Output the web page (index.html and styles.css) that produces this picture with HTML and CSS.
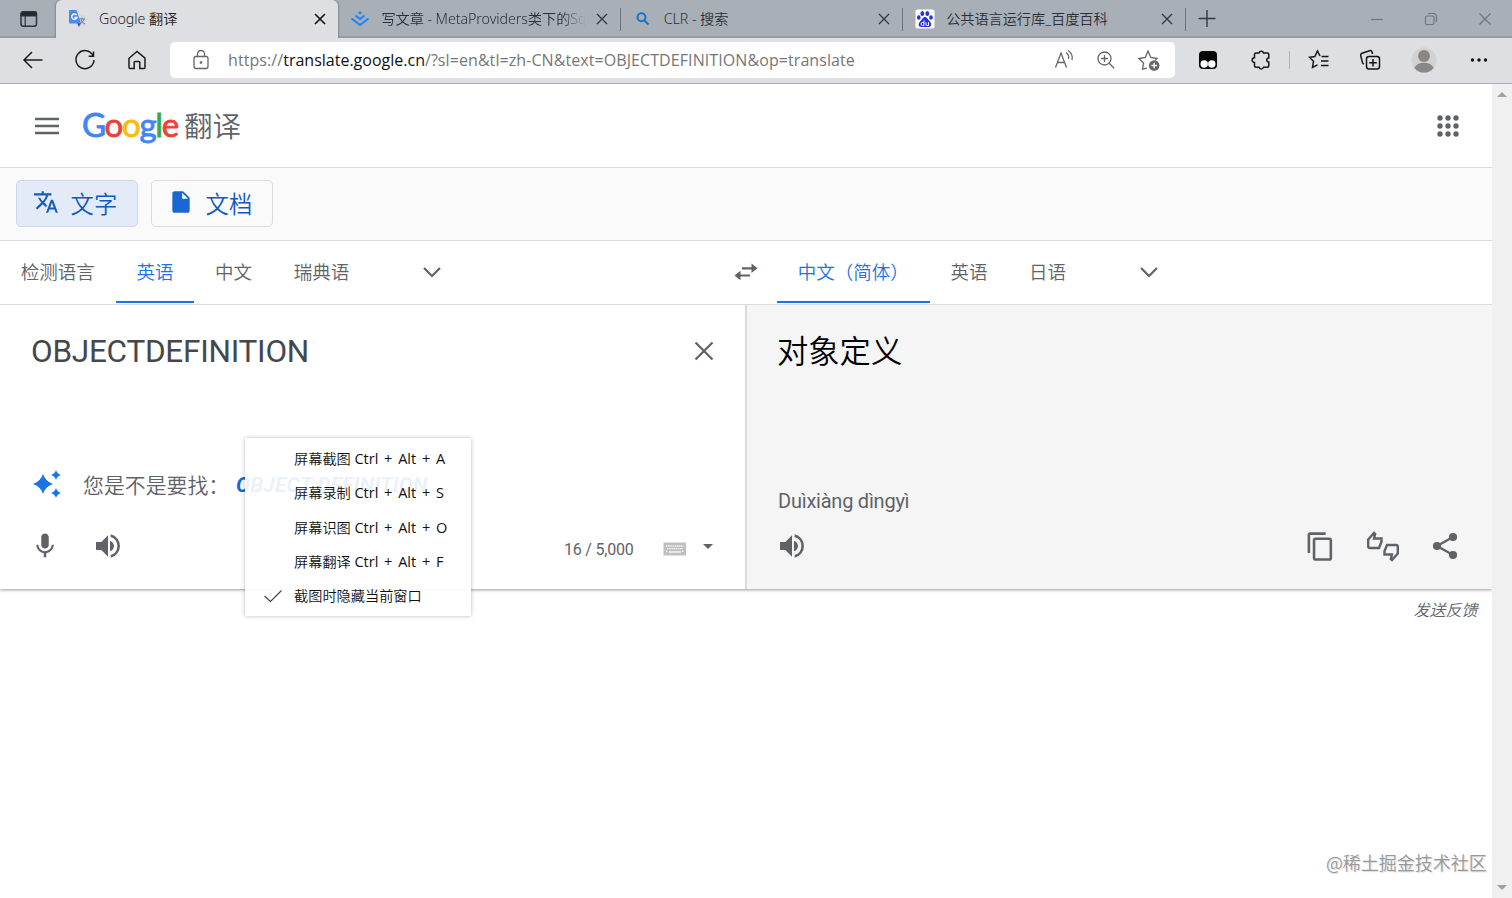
FILE: index.html
```html
<!DOCTYPE html>
<html lang="zh-CN">
<head>
<meta charset="utf-8">
<title>Google 翻译</title>
<link rel="stylesheet" href="styles.css">
</head>
<body>
<div class="tabstrip">
  <div class="tab-actions"><svg width="18" height="18" viewBox="0 0 18 18"><rect x="1" y="1.800" width="15.500" height="14.500" rx="2.500" fill="none" stroke="#303338" stroke-width="1.500"/><path d="M1 6V4a2.500 2.500 0 0 1 2.500-2.500h10.500A2.500 2.500 0 0 1 16.500 4v2zM5.200 6v10" fill="#25282c" stroke="#303338" stroke-width="1.200"/></svg></div>
  <div class="tab tab-active">
    <span class="favicon"><svg width="20" height="20" viewBox="0 0 20 20"><path d="M8 6h9q1 0 1 1v9.500q0 1-1 1h-6z" fill="#d5d9df"/><path d="M11 10h6M14 8.500V10M16 10q-1 3-4 5M13 11q1 3 4 4" stroke="#727a83" fill="none"/><path d="M9 14h4l-2 4z" fill="#4b48b8"/><path d="M2 1h6.500l4.500 13.500H2q-1 0-1-1V2q0-1 1-1z" fill="#4b8bf0"/><path d="M8.500 6a2.700 2.700 0 1 0 .5 2.500H6.500" fill="none" stroke="#fff" stroke-width="1.300"/></svg></span>
    <span class="tab-title">Google 翻译</span><svg class="tab-close dark" viewBox="0 0 16 16"><path d="M3 3l10 10M13 3L3 13"/></svg>
  </div>
  <div class="tab divided">
    <span class="favicon"><svg width="20" height="20" viewBox="0 0 20 20" fill="none" stroke="#1e80ff" stroke-width="2"><path d="M10 2.200l2 1.600-2 1.600-2-1.600z" fill="#1e80ff" stroke="none"/><path d="M5.500 6.500L10 10l4.500-3.500M1.500 9.500L10 16l8.500-6.500"/></svg></span>
    <span class="tab-title fade">写文章 - MetaProviders类下的Sq</span><svg class="tab-close" viewBox="0 0 16 16"><path d="M3 3l10 10M13 3L3 13"/></svg>
  </div>
  <div class="tab divided">
    <span class="favicon"><svg width="16" height="16" viewBox="0 0 16 16" fill="none" stroke="#1275cc" stroke-width="2"><circle cx="6.500" cy="6.300" r="4"/><path d="M9.500 9.500l4 4"/></svg></span>
    <span class="tab-title">CLR - 搜索</span><svg class="tab-close" viewBox="0 0 16 16"><path d="M3 3l10 10M13 3L3 13"/></svg>
  </div>
  <div class="tab divided">
    <span class="favicon"><svg width="20" height="20" viewBox="0 0 20 20"><rect x=".5" y=".5" width="19" height="19" rx="2" fill="#fff"/><g fill="#2932e1"><ellipse cx="7.300" cy="4.500" rx="1.900" ry="2.500"/><ellipse cx="12.300" cy="4.500" rx="1.900" ry="2.500"/><ellipse cx="3.800" cy="8.500" rx="1.800" ry="2.300"/><ellipse cx="16" cy="8.500" rx="1.800" ry="2.300"/><path d="M10 8c2 0 2.500 2 4 3.500 3.500 3 2.500 6.500-.5 6.500h-7C3 18 2.500 14.500 6 11.500 7.500 10 8 8 10 8z"/></g><path d="M9 11.500v5H7.500a1.500 1.500 0 0 1 0-3H9M11 13.300v2.200q0 1 1 1h1.500v-3.200" fill="none" stroke="#fff"/></svg></span>
    <span class="tab-title baike">公共语言运行库_百度百科</span><svg class="tab-close" viewBox="0 0 16 16"><path d="M3 3l10 10M13 3L3 13"/></svg>
  </div>
  <svg class="new-tab" width="20" height="20" viewBox="0 0 20 20"><path d="M10 2v17M1.500 10.500h17" stroke="#33373c" stroke-width="1.400"/></svg>
  <div class="window-controls">
    <svg width="14" height="14" viewBox="0 0 14 14"><path d="M1 7.500h12"/></svg>
    <svg width="14" height="14" viewBox="0 0 14 14"><rect x="1.500" y="4" width="8.500" height="8.500" rx="1.500"/><path d="M4 1.500h5.500a3 3 0 0 1 3 3V10"/></svg>
    <svg width="14" height="14" viewBox="0 0 14 14"><path d="M1.500 1.500l11 11M12.500 1.500l-11 11"/></svg>
  </div>
</div>
<div class="toolbar">
  <div class="nav-buttons">
    <svg width="22" height="22" viewBox="0 0 22 22"><path d="M20.500 11H2M10 3l-8 8 8 8"/></svg>
    <svg width="22" height="22" viewBox="0 0 22 22"><path d="M19 6.500A9 9 0 1 0 20 11M19.500 2.500v4.700h-4.800"/></svg>
    <svg width="22" height="22" viewBox="0 0 22 22"><path d="M3 9.200L11 2.500l8 6.700v9q0 1.300-1.300 1.300h-3.900v-6q0-1-1-1H9.200q-1 0-1 1v6H4.300Q3 19.500 3 18.200z"/></svg>
  </div>
  <div class="address">
    <svg class="lock" width="20" height="22" viewBox="0 0 20 22"><rect x="3" y="7.500" width="14" height="12" rx="2"/><path d="M6.500 7.500V5a3.500 3.500 0 0 1 7 0v2.500"/><circle cx="10" cy="13.500" r=".7" fill="#666"/></svg>
    <span class="url">https://<b>translate.google.cn</b>/?sl=en&amp;tl=zh-CN&amp;text=OBJECTDEFINITION&amp;op=translate</span>
    <svg class="read" width="22" height="22" viewBox="0 0 22 22"><path d="M2.500 18.500L8 4l5.500 14.500M4.400 13.500h7.200M13 3.500a6 6 0 0 1 2.500 6.500M15 1.500a9 9 0 0 1 4 9.500"/></svg>
    <svg class="zoomicon" width="22" height="22" viewBox="0 0 22 22"><circle cx="9.500" cy="9.500" r="6.500"/><path d="M14.200 14.200l5 5M6 9.500h7M9.500 6v7"/></svg>
    <svg class="addfav" width="24" height="24" viewBox="0 0 24 24"><path d="M10 20.200l-4.500 1 1-6.200L2 10.500l6.300-1L11 3.200l2.900 6.300 6.200 1-1.800 1.900"/><circle cx="17.200" cy="17.500" r="5.300" fill="#666" stroke="none"/><path d="M17.200 14.700v5.600M14.400 17.500H20" stroke="#fff"/></svg>
  </div>
  <div class="extensions">
    <svg width="20" height="20" viewBox="0 0 20 20"><rect x="1" y="1" width="18" height="18" rx="4" fill="#080808" stroke="none"/><circle cx="6.200" cy="14" r="3.700" fill="#fff" stroke="none"/><circle cx="13.800" cy="14" r="3.700" fill="#fff" stroke="none"/></svg>
    <svg width="22" height="22" viewBox="0 0 22 22"><path d="M6 4h3a2.300 2.300 0 0 1 4.500 0h3.800Q18.800 4 18.800 5.500v3.500a2 2 0 1 0 0 4v3.700q0 1.500-1.500 1.500h-3.800a2.300 2.300 0 0 1-4.500 0H6q-1.500 0-1.500-1.500v-3.200a2.400 2.400 0 0 1 0-4.800V5.500Q4.500 4 6 4z"/></svg>
    <i class="rule"></i>
    <svg width="22" height="22" viewBox="0 0 22 22"><path d="M12 7L9.500 2 6.800 7.500 1.500 8.300l4 4-1 6.200 5-2.600M13.500 7.500h7M13 12h7.500M13 16.500h7.500"/></svg>
    <svg width="22" height="22" viewBox="0 0 22 22"><path d="M5 15q-1.200-.3-1.600-1.600L1.700 6.500Q1.300 4.800 3 4.200l7.500-2.500q2-.6 2.500 1.300l.6 2"/><rect x="7.500" y="7.500" width="13" height="12.500" rx="2.500"/><path d="M14 10v7.500M10.200 13.800h7.600"/></svg>
    <svg width="26" height="26" viewBox="0 0 26 26"><circle cx="13" cy="13" r="12.500" fill="#d3d2d1" stroke="none"/><circle cx="13" cy="9" r="6" fill="#898886" stroke="none"/><path d="M3.300 21a10.500 8.500 0 0 1 19.400 0A12.500 12.500 0 0 1 3.300 21z" fill="#898886" stroke="none"/></svg>
    <svg width="22" height="22" viewBox="0 0 22 22"><g fill="#111" stroke="none"><circle cx="4.500" cy="11" r="1.700"/><circle cx="11" cy="11" r="1.700"/><circle cx="17.500" cy="11" r="1.700"/></g></svg>
  </div>
</div>
<div class="viewport">
  <main class="page">
    <header class="header">
      <svg width="24" height="18" viewBox="0 0 24 18"><path d="M0 2h24M0 9h24M0 16h24" stroke="#5f6368" stroke-width="2.300"/></svg>
      <span class="logo"><span class="blue">G</span><span class="red">o</span><span class="yellow">o</span><span class="blue">g</span><span class="green">l</span><span class="red">e</span></span>
      <span class="product">翻译</span>
      <svg class="apps" width="22" height="22" viewBox="0 0 22 22" fill="#5f6368"><circle cx="3" cy="3" r="2.700"/><circle cx="11" cy="3" r="2.700"/><circle cx="19" cy="3" r="2.700"/><circle cx="3" cy="11" r="2.700"/><circle cx="11" cy="11" r="2.700"/><circle cx="19" cy="11" r="2.700"/><circle cx="3" cy="19" r="2.700"/><circle cx="11" cy="19" r="2.700"/><circle cx="19" cy="19" r="2.700"/></svg>
    </header>
    <nav class="modes">
      <button class="mode selected"><svg width="26" height="26" viewBox="0 0 24 24" fill="#185abc"><path d="M12.870 15.070l-2.540-2.510.03-.03A17.520 17.520 0 0 0 14.070 6H17V4h-7V2H8v2H1v1.990h11.170C11.500 7.920 10.440 9.750 9 11.350 8.070 10.320 7.300 9.190 6.690 8h-2c.73 1.630 1.730 3.170 2.980 4.560l-5.090 5.020L4 19l5-5 3.110 3.110.76-2.040zM18.500 10h-2L12 22h2l1.120-3h4.750L21 22h2l-4.500-12zm-2.620 7l1.620-4.330L19.120 17h-3.240z"/></svg><span>文字</span></button>
      <button class="mode"><svg width="26" height="26" viewBox="0 0 24 24"><path d="M6 2C4.900 2 4 2.900 4 4v16c0 1.100.9 2 2 2h12c1.100 0 2-.9 2-2V8l-6-6zm7 7V3.500L18.500 9z" fill="#1967d2"/></svg><span>文档</span></button>
    </nav>
    <div class="languages">
      <div class="source-langs"><span class="lang">检测语言</span><span class="lang current">英语</span><span class="lang">中文</span><span class="lang">瑞典语</span><svg class="more-source" width="20" height="14" viewBox="0 0 20 14"><path d="M2 3l8 8 8-8"/></svg></div>
      <svg class="swap" width="26" height="20" viewBox="0 0 26 20"><path d="M9 6.300h10M17 13.500H7" fill="none" stroke="#5f6368" stroke-width="2.200"/><path d="M18.500 1.500l6 4.800-6 4.700zM7.500 8.700v9.500l-6-4.700z" fill="#5f6368"/></svg>
      <div class="target-langs"><span class="lang current">中文（简体）</span><span class="lang">英语</span><span class="lang">日语</span><svg class="more-target" width="20" height="14" viewBox="0 0 20 14"><path d="M2 3l8 8 8-8"/></svg></div>
    </div>
    <section class="panels">
      <div class="source">
        <div class="source-top"><span class="input-text">OBJECTDEFINITION</span><svg width="20" height="20" viewBox="0 0 20 20"><path d="M1.500 1.500l17 17M18.500 1.500l-17 17" stroke="#5f6368" stroke-width="2.200"/></svg></div>
        <div class="suggest"><svg width="30" height="30" viewBox="0 0 30 30" fill="#1a73e8"><path d="M11 5q2.500 7.500 10 10-7.500 2.500-10 10Q8.500 17.500 1 15 8.500 12.500 11 5zM24 1q1.200 3.800 5 5-3.800 1.200-5 5-1.200-3.800-5-5 3.800-1.200 5-5zM24 19q1.200 3.800 5 5-3.800 1.200-5 5-1.200-3.800-5-5 3.800-1.200 5-5z"/></svg><span class="prompt">您是不是要找：</span><em>OBJECT DEFINITION</em></div>
        <div class="source-tools">
          <svg width="30" height="30" viewBox="0 0 24 24" fill="#5f6368"><path d="M12 14c1.660 0 3-1.340 3-3V5c0-1.660-1.340-3-3-3S9 3.340 9 5v6c0 1.660 1.340 3 3 3zm5.300-3c0 3-2.540 5.100-5.300 5.100S6.700 14 6.700 11H5c0 3.410 2.720 6.230 6 6.720V21h2v-3.280c3.280-.48 6-3.300 6-6.720h-1.700z"/></svg>
          <svg class="speaker" width="32" height="32" viewBox="0 0 24 24" fill="#5f6368"><path d="M3 9v6h4l5 5V4L7 9H3zm10.500-1.030v8.050A4.500 4.500 0 0 0 16.500 12c0-1.770-1.020-3.290-3-4.030zM14 3.230v2.060a7 7 0 0 1 0 13.420v2.060a9 9 0 0 0 0-17.540z"/></svg>
          <span class="counter">16 / 5,000</span>
          <svg class="keyboard" width="24" height="14" viewBox="0 0 24 14"><rect x=".5" y=".5" width="22.500" height="13" fill="#bfbfbf"/><path d="M3 4h18M4 6.700h16M3 9.300h2M19 9.300h2" stroke="#fff" stroke-width="1.300" stroke-dasharray="1.300 .9"/><path d="M6 10h12" stroke="#fff" stroke-width="1.300"/></svg>
          <i class="caret"></i>
        </div>
      </div>
      <div class="target">
        <div class="result">对象定义</div>
        <div class="pinyin">Duìxiàng dìngyì</div>
        <div class="target-tools">
          <svg width="32" height="32" viewBox="0 0 24 24" fill="#5f6368"><path d="M3 9v6h4l5 5V4L7 9H3zm10.500-1.030v8.050A4.500 4.500 0 0 0 16.500 12c0-1.770-1.020-3.290-3-4.030zM14 3.230v2.060a7 7 0 0 1 0 13.420v2.060a9 9 0 0 0 0-17.540z"/></svg>
          <div class="result-actions">
            <svg width="31" height="31" viewBox="0 0 24 24" fill="#5f6368"><path d="M16 1H4c-1.100 0-2 .9-2 2v14h2V3h12V1zm3 4H8c-1.100 0-2 .9-2 2v14c0 1.100.9 2 2 2h11c1.100 0 2-.9 2-2V7c0-1.100-.9-2-2-2zm0 16H8V7h11v14z"/></svg>
            <svg width="34" height="32" viewBox="0 0 34 32" fill="none" stroke="#5f6368" stroke-width="2.400"><path d="M2.200 9.500L8 3l1.200 1L8 8.500h7.500v3.200L13 18H4q-1.800 0-1.800-1.800zM31.800 23.500L26 30l-1.200-1 1.200-4.500h-7.500v-3.200L21 15h9q1.800 0 1.800 1.800z"/></svg>
            <svg width="28" height="30" viewBox="0 0 28 30"><path d="M23 5.500L6 15l17 9.500" fill="none" stroke="#5f6368" stroke-width="2.400"/><g fill="#5f6368"><circle cx="22" cy="6" r="4.100"/><circle cx="6" cy="15" r="4.100"/><circle cx="22" cy="24" r="4.100"/></g></svg>
          </div>
        </div>
      </div>
    </section>
    <div class="feedback">发送反馈</div>
  </main>
  <aside class="scrollbar"><i class="up"></i><i class="down"></i></aside>
</div>
<div class="capture-menu">
  <div class="entry">屏幕截图 <span>Ctrl + Alt + A</span></div>
  <div class="entry">屏幕录制 <span>Ctrl + Alt + S</span></div>
  <div class="entry">屏幕识图 <span>Ctrl + Alt + O</span></div>
  <div class="entry">屏幕翻译 <span>Ctrl + Alt + F</span></div>
  <div class="entry"><svg class="check" width="20" height="14" viewBox="0 0 20 14"><path d="M1.500 7l6 5.500L18.500 1.500" fill="none" stroke="#444" stroke-width="1.200"/></svg>截图时隐藏当前窗口</div>
</div>
<div class="watermark">@稀土掘金技术社区</div>
</body>
</html>
```

FILE: styles.css
```css
* { box-sizing: border-box; }
body { margin: 0; width: 1512px; height: 898px; overflow: hidden; background: #fff; font-family: "Open Sans", "Noto Sans CJK SC", sans-serif; color: #5f6368; }
svg { display: block; flex: none; }

.tabstrip { display: flex; height: 38px; background: #a8afb6; border-bottom: 2px solid #959ba3; }
.tab-actions { width: 56px; padding: 10px 0 0 20px; }
.tab { display: flex; width: 282.4px; height: 38px; padding-left: 12px; position: relative; align-items: center; color: #2c3036; }
.tab-active { background: #dddfe3; border-radius: 6px 6px 0 0; color: #1c1c1c; box-shadow: -1px 0 2px #858b92, 1px 0 2px #858b92; clip-path: inset(0 -3px 0 -3px); }
.divided::after { content: ""; position: absolute; right: 0; top: 8px; width: 1px; height: 23px; background: #6c7279; }
.favicon { width: 20px; height: 38px; display: flex; align-items: center; justify-content: center; }
.tab-title { width: 205px; margin-left: 11px; white-space: nowrap; overflow: hidden; line-height: 38px; height: 38px; font-family: "Noto Sans", "Noto Sans CJK SC", sans-serif; font-size: 14.2px; letter-spacing: -.05px; font-weight: 350; }
.fade { letter-spacing: -.05px; -webkit-mask-image: linear-gradient(90deg, #000 88%, transparent); mask-image: linear-gradient(90deg, #000 88%, transparent); }
.baike { letter-spacing: -.05px; font-size: 14.2px; }
.tab-close { width: 16px; height: 16px; margin-left: 7.500px; stroke: #34383e; stroke-width: 1.300; }
.dark { stroke: #111; stroke-width: 1.600; }
.new-tab { margin: 8px 0 0 11px; }
.window-controls { margin-left: auto; display: flex; gap: 40px; padding: 12px 20px 0 0; fill: none; stroke: #71767c; stroke-width: 1.200; }

.toolbar { display: flex; height: 46px; background: #dddfe3; border-bottom: 1px solid #a9adb3; align-items: center; padding-bottom: 1px; }
.nav-buttons { width: 170px; padding-left: 22px; display: flex; gap: 30px; fill: none; stroke: #1c1c1c; stroke-width: 1.500; }
.address { width: 1005px; height: 36px; background: #fff; border-radius: 5px; display: flex; align-items: center; fill: none; stroke: #666; stroke-width: 1.300; }
.lock { margin-left: 21px; }
.url { width: 640px; margin-left: 17px; font-size: 16px; line-height: 34px; white-space: nowrap; color: #767676; letter-spacing: .08px; }
.url b { font-weight: 400; color: #111; letter-spacing: 0; }
.read { margin-left: 185px; }
.zoomicon { margin-left: 20px; }
.addfav { margin-left: 20px; }
.extensions { flex: 1; height: 44px; display: flex; align-items: center; padding-left: 23px; fill: none; stroke: #161616; stroke-width: 1.500; }
.extensions svg:nth-child(2) { margin-left: 32px; }
.rule { width: 1px; height: 18px; background: #b0b2b5; margin-left: 17px; }
.extensions svg:nth-child(4) { margin-left: 18px; }
.extensions svg:nth-child(5) { margin-left: 29px; }
.extensions svg:nth-child(6) { margin-left: 30px; }
.extensions svg:nth-child(7) { margin-left: 31px; }

.viewport { display: flex; height: 814px; }
.page { width: 1492px; }
.scrollbar { width: 20px; background: #f0f0f0; display: flex; flex-direction: column; justify-content: space-between; align-items: center; padding: 8px 0; }
.up, .down { border: 5px solid transparent; height: 0; }
.up { border-top: 0; border-bottom-color: #a0a0a0; }
.down { border-bottom: 0; border-top-color: #a0a0a0; }

.header { height: 84px; border-bottom: 1px solid #dadce0; display: flex; align-items: center; padding: 0 33px 0 35px; }
.logo { width: 97px; margin-left: 23px; padding-bottom: 4px; font: 400 33px/40px Lato, sans-serif; letter-spacing: -1.3px; white-space: nowrap; -webkit-text-stroke: .8px; }
.blue { color: #4285f4; } .red { color: #ea4335; } .yellow { color: #fbbc05; } .green { color: #34a853; }
.product { margin-left: 5px; font-size: 28.5px; line-height: 40px; font-weight: 350; }
.apps { margin-left: auto; }
.modes { height: 73px; background: #fafafa; border-bottom: 1px solid #dadce0; display: flex; gap: 13px; padding: 12px 15.6px; }
.mode { width: 122px; height: 47px; padding: 0 0 4px 16.500px; display: flex; align-items: center; gap: 11.500px; border: 1px solid #dadce0; border-radius: 5px; background: #fafafa; color: #1558bd; font: 350 23.3px/40px "Noto Sans CJK SC", sans-serif; white-space: nowrap; }
.mode span { padding-top: 2px; }
.selected { background: #e3eaf8; border-color: #d0d6e6; }
.languages { height: 64px; display: flex; border-bottom: 1px solid #dadce0; font: 350 18.5px/60px "Noto Sans CJK SC", sans-serif; fill: none; }
.source-langs { width: 733px; display: flex; }
.lang { padding: 0 20.800px; height: 62px; white-space: nowrap; }
.current { color: #1a73e8; border-bottom: 2px solid #1a73e8; }
.more-source, .more-target { stroke: #5f6368; stroke-width: 2.200; margin-top: 24px; }
.more-source { margin-left: 52px; }
.more-target { margin-left: 52px; }
.swap { margin-top: 21px; }
.target-langs { margin-left: 18px; display: flex; }

.panels { height: 284px; display: flex; box-shadow: 0 1px 3px rgba(0,0,0,.4); clip-path: inset(0 0 -5px 0); }
.source { width: 745px; }
.source-top { display: flex; justify-content: space-between; align-items: center; height: 92px; padding: 0 31px; }
.input-text { padding-top: 2px; font: 400 31.5px/40px Roboto, sans-serif; color: #44484c; letter-spacing: -.25px; }
.suggest { margin-top: 68px; height: 38px; padding-left: 32px; display: flex; align-items: center; white-space: nowrap; }
.prompt { margin-left: 21px; width: 153px; font: 350 20.9px/38px "Noto Sans CJK SC", sans-serif; }
.suggest em { font: italic 700 21px/38px Roboto, sans-serif; letter-spacing: .15px; padding-top: 2px; color: #1967d2; }
.source-tools { height: 86px; display: flex; align-items: center; padding: 0 0 0 30px; }
.speaker { margin-left: 32px; }
.counter { margin-left: 440px; width: 80px; font: 16px/20px Roboto, sans-serif; letter-spacing: -.2px; padding-top: 8px; white-space: nowrap; }
.keyboard { margin: 6px 0 0 19px; }
.caret { border: 5px solid transparent; border-top-color: #5f6368; border-bottom: 0; margin-left: 15.500px; }
.target { flex: 1; background: #f5f5f5; border-left: 2px solid #dadce0; }
.result { height: 92px; padding-left: 30px; font: 350 31.3px/90px "Noto Sans CJK SC", sans-serif; color: #000; }
.pinyin { margin-top: 84px; height: 40px; padding-left: 31px; font: 20px/40px Roboto, sans-serif; letter-spacing: -.24px; }
.target-tools { height: 50px; display: flex; justify-content: space-between; align-items: center; padding: 0 33px 0 29px; }
.result-actions { display: flex; gap: 31px; align-items: center; }
.result-actions svg:first-child { margin-right: -1px; }
.feedback { text-align: right; padding: 10px 14.500px 0 0; font: italic 350 16px/20px "Noto Sans CJK SC", sans-serif; }

.capture-menu { position: absolute; left: 245px; top: 438px; width: 226px; height: 178px; padding-top: 4px; background: rgba(255,255,255,.91); box-shadow: 0 0 4px rgba(0,0,0,.28); color: #111; font-size: 14.200px; font-weight: 350; }
.entry { height: 34.300px; line-height: 34px; padding-left: 49px; white-space: nowrap; position: relative; }
.entry span { font-weight: 400; font-size: 14.500px; word-spacing: 2px; }
.check { position: absolute; left: 18px; top: 10px; }
.watermark { position: absolute; left: 1326px; top: 849px; font: 350 18px/26px "Noto Sans CJK SC", sans-serif; color: #999; white-space: nowrap; text-shadow: 1px 1px 1px rgba(0,0,0,.15); }
```
